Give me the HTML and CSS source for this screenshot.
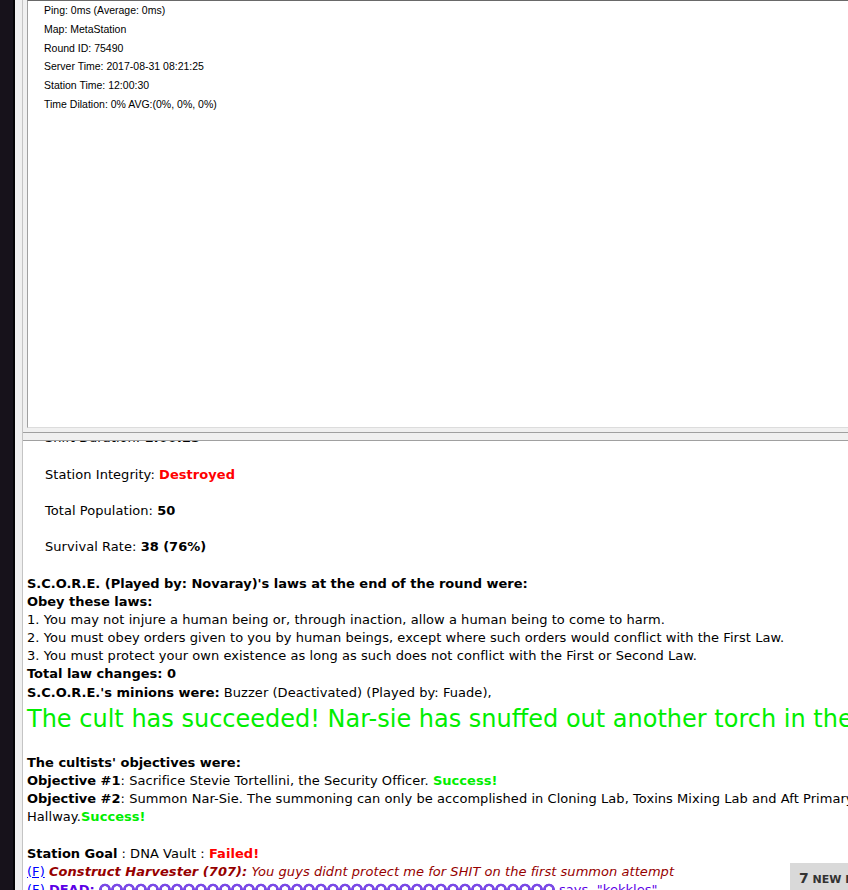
FILE: index.html
```html
<!DOCTYPE html>
<html>
<head>
<meta charset="utf-8">
<title>Round end</title>
<link rel="stylesheet" href="styles.css">
</head>
<body>
<div class="app">
  <div class="backdrop"></div>
  <div class="window">
    <div class="frame">
      <div class="stat-wrap">
        <div class="stat-box">
          <div>Ping: 0ms (Average: 0ms)</div>
          <div>Map: MetaStation</div>
          <div>Round ID: 75490</div>
          <div>Server Time: 2017-08-31 08:21:25</div>
          <div>Station Time: 12:00:30</div>
          <div>Time Dilation: 0% AVG:(0%, 0%, 0%)</div>
        </div>
      </div>
      <div class="splitter"></div>
      <div class="chat">
        <div class="chat-inner">
          <div class="round-stats">
            Shift Duration: <b>1:00:25</b><br><br>
            Station Integrity: <span class="redtext">Destroyed</span><br><br>
            Total Population: <b>50</b><br><br>
            Survival Rate: <b>38 (76%)</b><br><br>
          </div>
          <b>S.C.O.R.E. (Played by: Novaray)'s laws at the end of the round were:</b><br>
          <b>Obey these laws:</b><br>
          1. You may not injure a human being or, through inaction, allow a human being to come to harm.<br>
          2. You must obey orders given to you by human beings, except where such orders would conflict with the First Law.<br>
          3. You must protect your own existence as long as such does not conflict with the First or Second Law.<br>
          <b>Total law changes: 0</b><br>
          <b>S.C.O.R.E.'s minions were:</b> Buzzer (Deactivated) (Played by: Fuade),
          <div class="greentext">The cult has succeeded! Nar-sie has snuffed out another torch in the void!</div>
          <br>
          <b>The cultists' objectives were:</b><br>
          <b>Objective #1</b>: Sacrifice Stevie Tortellini, the Security Officer. <span class="greenannounce">Success!</span><br>
          <b>Objective #2</b>: Summon Nar-Sie. The summoning can only be accomplished in Cloning Lab, Toxins Mixing Lab and Aft Primary Hallway.<span class="greenannounce">Success!</span><br>
          <br>
          <b>Station Goal</b> : DNA Vault : <span class="redtext">Failed!</span><br>
          <a class="flink" href="#">(F)</a> <span class="cult-name">Construct Harvester (707):</span> <span class="cult-msg">You guys didnt protect me for SHIT on the first summon attempt</span><br>
          <a class="flink" href="#">(F)</a> <span class="deadsay"><b>DEAD:</b> <span class="glyphs"></span> <span class="says">says, "kekkles"</span></span>
        </div>
      </div>
    </div>
  </div>
  <div class="new-msg"><span class="num">7</span>&nbsp;NEW MESSAGES</div>
</div>
</body>
</html>
```
FILE: styles.css
```css
html, body {
  margin: 0;
  padding: 0;
  width: 848px;
  height: 890px;
  overflow: hidden;
  background: #17121b;
}

.app {
  display: flex;
  height: 890px;
  position: relative;
}

.backdrop {
  flex: none;
  width: 13px;
  background: #17121b;
  border-right: 2px solid #050406;
}

.window {
  flex: none;
  width: 1000px;
  background: #f0f0f0;
  padding-left: 7px;
  display: flex;
}

.frame {
  flex: 1;
  border-left: 1px solid #c4c4c4;
  display: flex;
  flex-direction: column;
}

.stat-wrap {
  padding: 0 0 4px 4px;
  border-bottom: 1px solid #a0a0a0;
}

.stat-box {
  box-sizing: border-box;
  height: 428px;
  background: #fff;
  border-left: 1px solid #a0a0a0;
  border-top: 1px solid #696969;
  border-bottom: 1px solid #dcdcdc;
  padding-left: 16px;
  font-family: "Liberation Sans", Arial, sans-serif;
  font-size: 10.5px;
  line-height: 18.8px;
  color: #000;
}

.splitter {
  height: 7px;
  background: #f0f0f0;
  border-bottom: 1px solid #a0a0a0;
}

.chat {
  flex: 1;
  background: #fff;
  overflow: hidden;
  padding-left: 4px;
  font-family: "DejaVu Sans", Verdana, sans-serif;
  font-size: 13px;
  letter-spacing: 0.05px;
  line-height: 18.15px;
  color: #000;
}

.chat b {
  letter-spacing: -0.02px;
}

.chat-inner {
  width: 870px;
  margin-top: -11.6px;
}

.round-stats {
  margin-left: 18px;
}

.redtext {
  color: #ff0000;
  font-weight: bold;
}

.greentext {
  color: #00ee00;
  font-size: 24px;
  letter-spacing: 0;
  line-height: 34px;
  white-space: nowrap;
}

.greenannounce {
  color: #00ee00;
  font-weight: bold;
}

.flink {
  color: #0000ff;
  text-decoration: underline;
}

.cult-name {
  color: #960000;
  font-weight: bold;
  font-style: italic;
}

.cult-msg {
  color: #960000;
  font-style: italic;
}

.deadsay {
  color: #5c00e6;
}

.glyphs {
  display: inline-block;
  width: 456px;
  height: 13px;
  vertical-align: -2px;
  background: radial-gradient(circle at 6px 6.5px, transparent 3px, #7a4ae6 3.5px, #7a4ae6 5.5px, transparent 6.2px) 0 0 / 12px 13px repeat-x;
}

.says {
  text-decoration: underline;
}

.new-msg {
  position: absolute;
  left: 790px;
  top: 863px;
  width: 120px;
  height: 27px;
  box-sizing: border-box;
  padding-left: 9px;
  padding-top: 4px;
  background: #d9d9d9;
  color: #333;
  font-family: "DejaVu Sans", Verdana, sans-serif;
  font-weight: bold;
  font-size: 11px;
  line-height: 22px;
  white-space: nowrap;
}

.new-msg .num {
  font-size: 14px;
}
```
